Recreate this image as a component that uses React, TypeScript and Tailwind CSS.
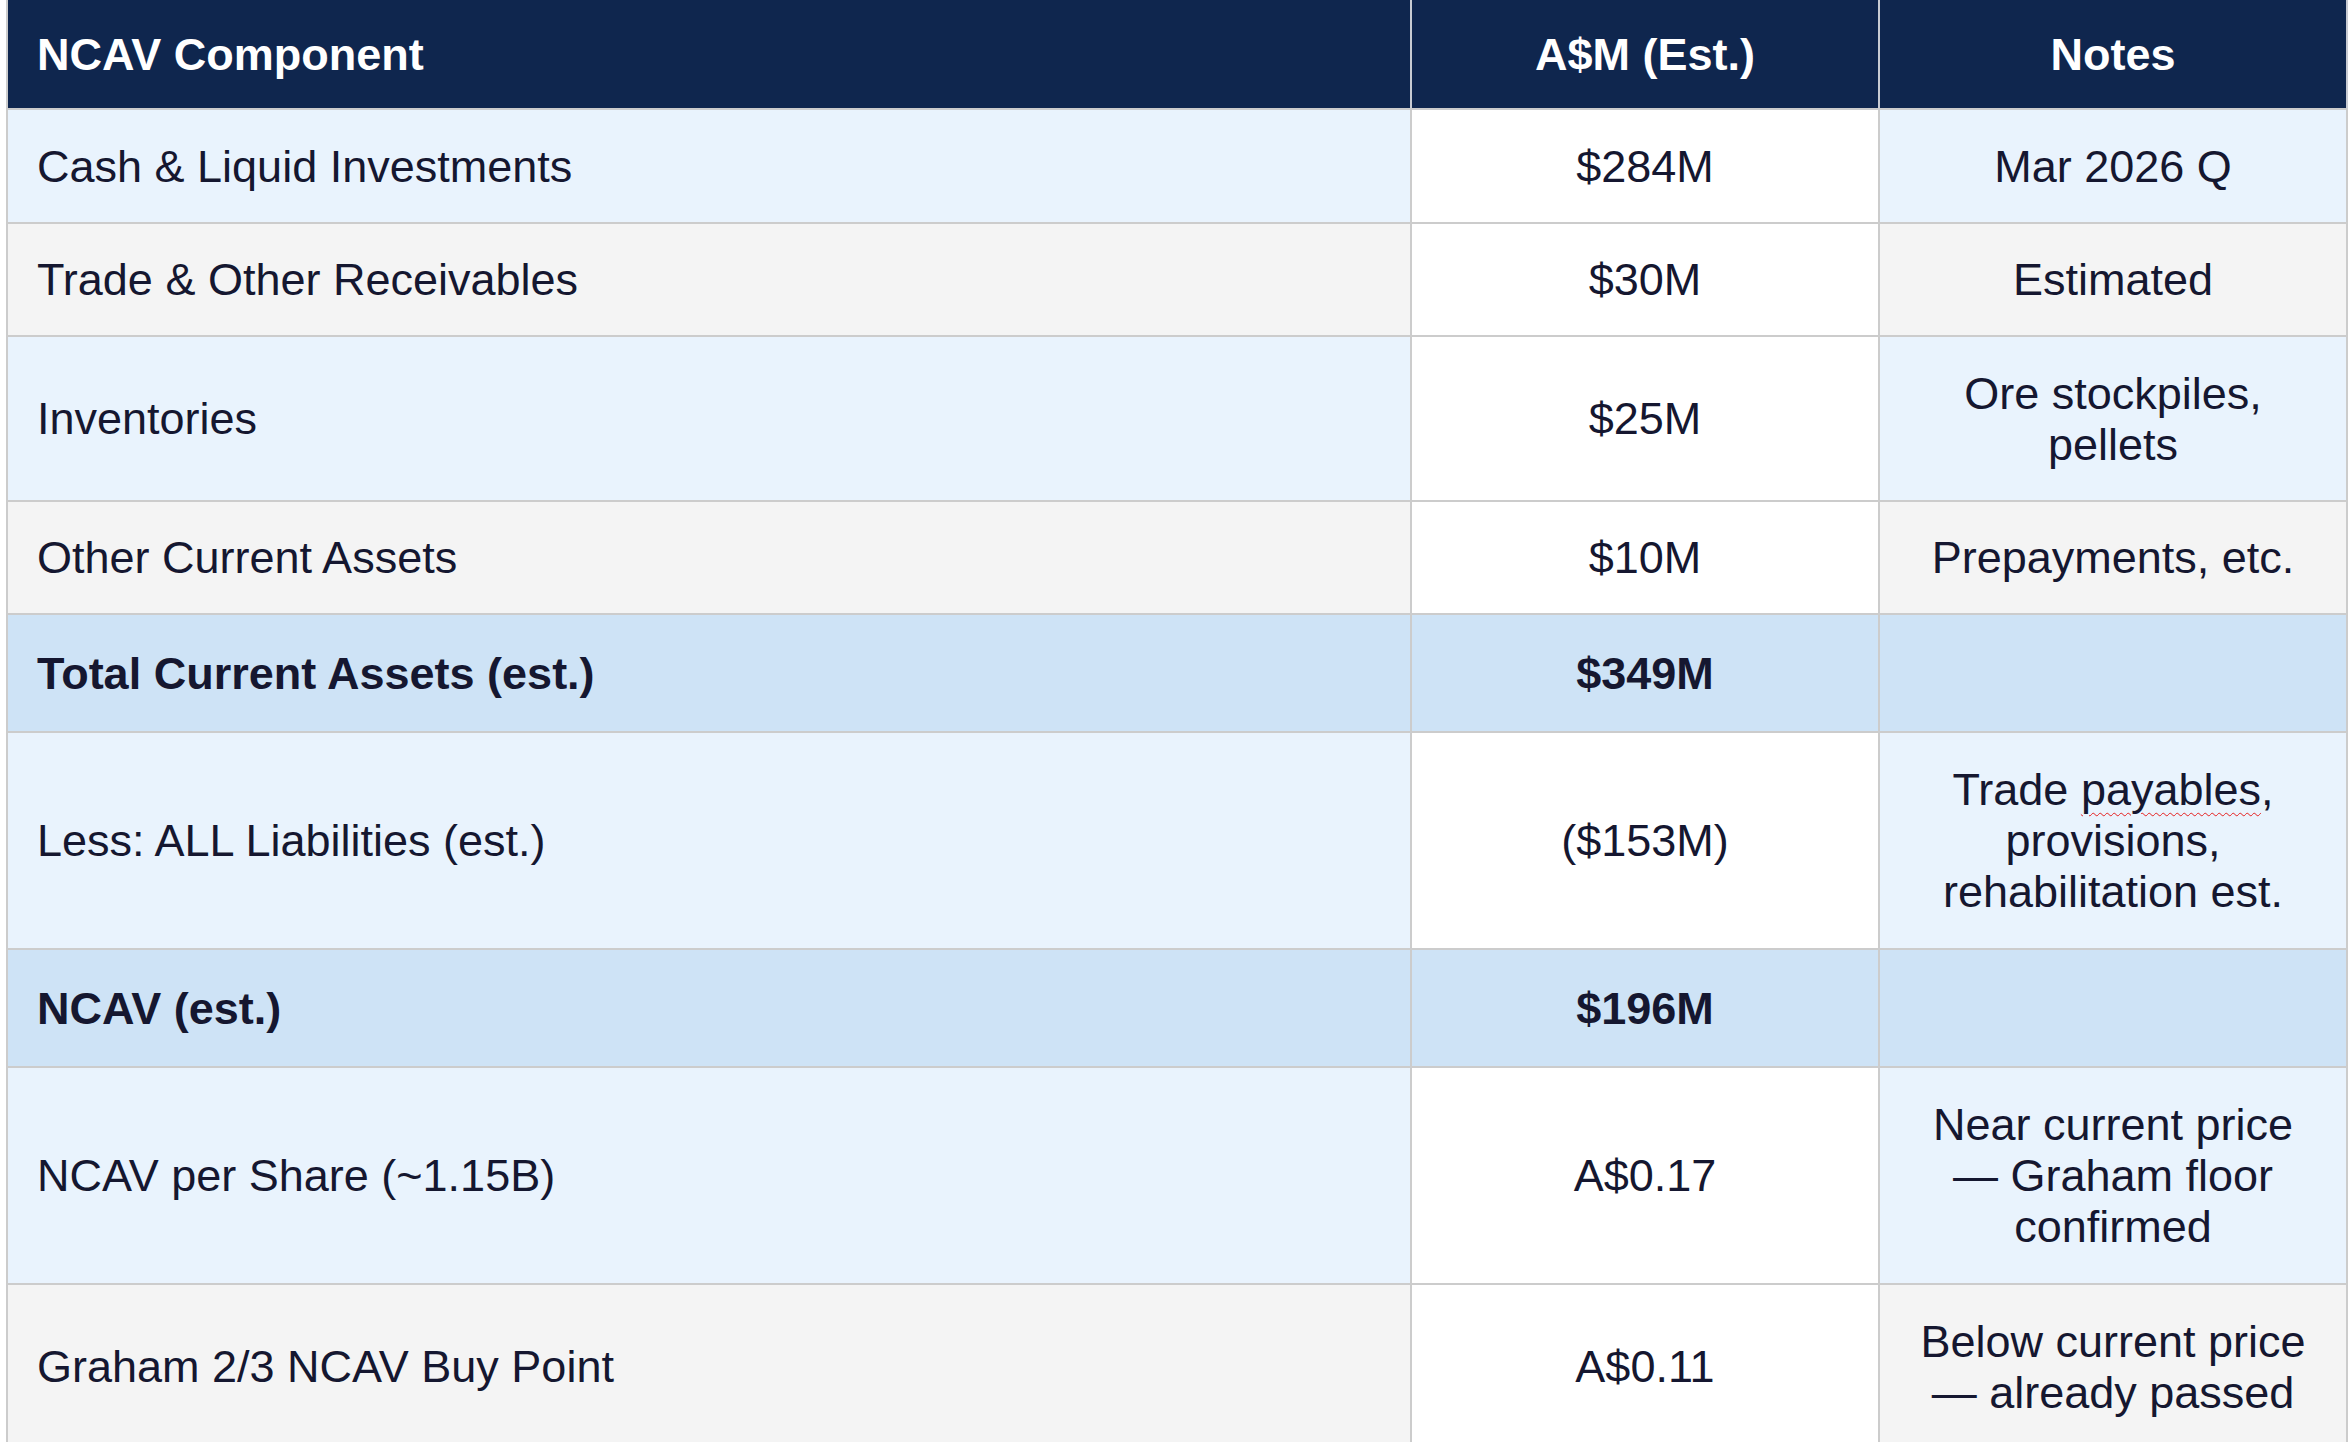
import React from "react";

type Kind = "blue" | "gray" | "total";

type Row = {
    label: string;
    value: string;
    note: React.ReactNode;
    kind: Kind;
    height: string;
};

const rows: Row[] = [
    {
        label: "Cash & Liquid Investments",
        value: "$284M",
        note: "Mar 2026 Q",
        kind: "blue",
        height: "h-[114px]",
    },
    {
        label: "Trade & Other Receivables",
        value: "$30M",
        note: "Estimated",
        kind: "gray",
        height: "h-[113px]",
    },
    {
        label: "Inventories",
        value: "$25M",
        note: "Ore stockpiles, pellets",
        kind: "blue",
        height: "h-[165px]",
    },
    {
        label: "Other Current Assets",
        value: "$10M",
        note: "Prepayments, etc.",
        kind: "gray",
        height: "h-[113px]",
    },
    {
        label: "Total Current Assets (est.)",
        value: "$349M",
        note: "",
        kind: "total",
        height: "h-[118px]",
    },
    {
        label: "Less: ALL Liabilities (est.)",
        value: "($153M)",
        note: (
            <>
                Trade{" "}
                <span className="underline decoration-wavy decoration-[#e52020] decoration-1 underline-offset-[7px]">
                    payables
                </span>
                , provisions, rehabilitation est.
            </>
        ),
        kind: "blue",
        height: "h-[217px]",
    },
    {
        label: "NCAV (est.)",
        value: "$196M",
        note: "",
        kind: "total",
        height: "h-[118px]",
    },
    {
        label: "NCAV per Share (~1.15B)",
        value: "A$0.17",
        note: "Near current price — Graham floor confirmed",
        kind: "blue",
        height: "h-[217px]",
    },
    {
        label: "Graham 2/3 NCAV Buy Point",
        value: "A$0.11",
        note: "Below current price — already passed",
        kind: "gray",
        height: "h-[165px]",
    },
];

const sideBg: Record<Kind, string> = {
    blue: "bg-[#e9f3fd]",
    gray: "bg-[#f4f4f4]",
    total: "bg-[#cee3f6]",
};

const midBg: Record<Kind, string> = {
    blue: "bg-white",
    gray: "bg-white",
    total: "bg-[#cee3f6]",
};

const cols = "grid grid-cols-[1404px_468px_468px]";

export default function App() {
    return (
        <div
            className="h-[1442px] overflow-hidden bg-white pl-[6px] text-[45px] leading-[51px] text-[#151730]"
            style={{ fontFamily: '"Liberation Sans", Arial, sans-serif' }}
        >
            <div className="w-[2342px] border-l-2 border-[#cccccc]">
                {/* Header */}
                <div
                    className={`${cols} h-[110px] bg-[#0f264e] border-b-2 border-[#cccccc] font-bold text-white`}
                >
                    <div className="flex items-center px-[29px] border-r-2 border-[#c8cbd2]">
                        NCAV Component
                    </div>
                    <div className="flex items-center justify-center px-[28px] border-r-2 border-[#c8cbd2]">
                        A$M (Est.)
                    </div>
                    <div className="flex items-center justify-center px-[28px] border-r-2 border-[#c8cbd2]">
                        Notes
                    </div>
                </div>

                {rows.map((row) => {
                    const bold = row.kind === "total" ? "font-bold" : "";
                    return (
                        <div
                            key={row.label}
                            className={`${cols} ${row.height} border-b-2 border-[#cccccc] ${bold}`}
                        >
                            <div
                                className={`flex items-center px-[29px] border-r-2 border-[#cccccc] ${sideBg[row.kind]}`}
                            >
                                {row.label}
                            </div>
                            <div
                                className={`flex items-center justify-center px-[28px] border-r-2 border-[#cccccc] ${midBg[row.kind]}`}
                            >
                                {row.value}
                            </div>
                            <div
                                className={`flex items-center justify-center px-[28px] text-center border-r-2 border-[#cccccc] ${sideBg[row.kind]}`}
                            >
                                <span>{row.note}</span>
                            </div>
                        </div>
                    );
                })}
            </div>
        </div>
    );
}
